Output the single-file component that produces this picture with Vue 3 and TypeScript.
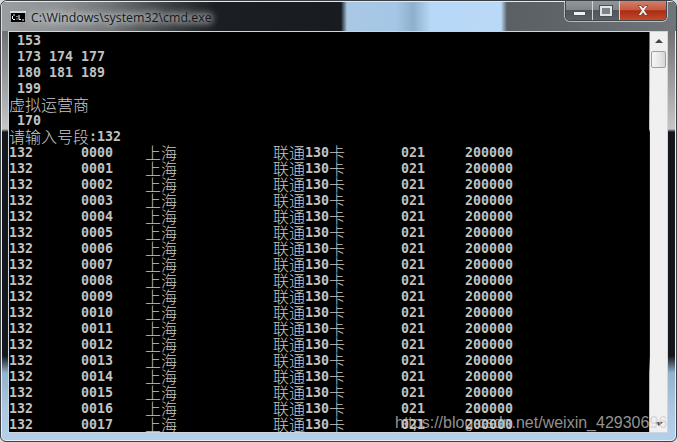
<script setup lang="ts">
const rows: string[] = Array.from({ length: 18 }, (_, i) => String(i).padStart(4, '0'))
</script>

<template>
  <div class="window">
    <header class="titlebar">
      <div class="title-left">
        <svg class="app-icon" width="16" height="12" viewBox="0 0 16 12">
          <rect x="0" y="0" width="16" height="12" fill="#9aa0a4" />
          <rect x="0" y="0" width="16" height="2" fill="#d5d9dc" />
          <rect x="1" y="2" width="14" height="9" fill="#000" />
          <path d="M3 4h2M2.500 5v3M3 8.500h2M7 5v1M7 7.500v1M9 4v4.500h2M12 9h2" stroke="#fff" stroke-width="1" fill="none" />
        </svg>
        <span class="title-text">C:\Windows\system32\cmd.exe</span>
      </div>
      <div class="controls">
        <button class="ctl ctl-min" aria-label="minimize"><i class="min-glyph"></i></button>
        <button class="ctl ctl-max" aria-label="maximize"><i class="max-glyph"></i></button>
        <button class="ctl ctl-close" aria-label="close">
          <svg width="16" height="13" viewBox="0 0 16 13">
            <path d="M3 1.500h3l2 2.500 2-2.500h3l-3.500 5 3.500 5h-3l-2-2.800-2 2.800h-3l3.500-5z" fill="#f4f0ee" stroke="#6b2a20" stroke-width="0.7" />
          </svg>
        </button>
      </div>
    </header>
    <div class="client">
      <main class="console">
        <div class="line"> 153</div>
        <div class="line"> 173 174 177</div>
        <div class="line"> 180 181 189</div>
        <div class="line"> 199</div>
        <div class="line"><span class="cjk">虚拟运营商</span></div>
        <div class="line"> 170</div>
        <div class="line"><span class="cjk">请输入号段</span>:132</div>
        <div v-for="n in rows" :key="n" class="line row">
          <span>132</span>
          <span>{{ n }}</span>
          <span><span class="cjk">上海</span></span>
          <span><span class="cjk">联通</span>130<span class="cjk">卡</span></span>
          <span>021</span>
          <span>200000</span>
        </div>
      </main>
      <aside class="scrollbar">
        <div class="arrow up"></div>
        <div class="thumb"></div>
        <div class="track"></div>
        <div class="arrow down"></div>
      </aside>
    </div>
    <div class="watermark">https://blog.csdn.net/weixin_42930696</div>
  </div>
</template>

<style scoped>
.window {
  position: relative;
  width: 677px;
  height: 442px;
  box-sizing: border-box;
  overflow: hidden;
  display: flex;
  flex-direction: column;
  border-radius: 7px 7px 6px 6px;
  border: 1px solid #3c4044;
  box-shadow: inset 0 0 0 1px #e8eef2;
  background: linear-gradient(180deg,
    #6f7173 30px, #c6c6c6 128px, #14181c 131px, #14181c 355px,
    #94b2ce 372px, #aec8e2 410px, #b4d0ea 442px);
}
.titlebar {
  height: 30px;
  flex: none;
  display: flex;
  justify-content: space-between;
  background:
    linear-gradient(90deg,
      #9a9ea0 0, #8d9193 60px, #6f7375 110px, #3a3e41 170px,
      #1b1f23 215px, #181c20 340px, #a9c8e4 346px, #a5c6e6 395px,
      #8fb0cc 412px, #b7d8f6 430px, #b9d9f6 500px, #5a6064 506px,
      #5e6468 560px, #70767a 676px);
  box-shadow: inset 0 1px 0 #e4e8ea, inset 1px 0 0 #d8dcde;
}
.title-left {
  display: flex;
  align-items: center;
  gap: 5px;
  padding: 2px 0 0 9px;
}
.app-icon {
  display: block;
}
.title-text {
  font-family: "Open Sans", "Liberation Sans", Arial, sans-serif;
  font-size: 12.360px;
  color: #14181c;
  text-shadow: 0 0 6px #d6dadc, 0 0 8px #c6cacc, 0 0 10px #c6cacc;
}
.controls {
  display: flex;
  height: 19px;
  margin-right: 9px;
  border: 1px solid #44484c;
  border-top: 0;
  border-radius: 0 0 5px 5px;
  box-shadow: 0 0 0 1px rgba(255, 255, 255, 0.55);
  overflow: hidden;
}
.ctl {
  display: flex;
  align-items: center;
  justify-content: center;
  padding: 0;
  border: 0;
  height: 100%;
}
.ctl-min,
.ctl-max {
  width: 27px;
  background: linear-gradient(#8f979c 0, #7f878c 45%, #50575c 50%, #5a6165 100%);
  border-right: 1px solid #cfd5d8;
}
.ctl-close {
  width: 46px;
  background: linear-gradient(#d3806b 0, #c65a42 45%, #aa2c13 52%, #c5492c 100%);
}
.min-glyph {
  display: block;
  width: 11px;
  height: 3px;
  margin-top: 6px;
  background: #eef1f2;
  box-shadow: 0 0 0 1px #4a5054;
}
.max-glyph {
  display: block;
  width: 8px;
  height: 6px;
  border: 2px solid #dfe3e5;
  box-shadow: 0 0 0 1px #4a5054;
  background: #7a8286;
}
.client {
  display: flex;
  margin: 1px 9px 0 8px;
  height: 400px;
  flex: none;
  box-shadow: 0 0 0 1px #ccd6dd;
}
.console {
  width: 640px;
  height: 400px;
  box-sizing: border-box;
  padding-top: 1px;
  flex: none;
  overflow: hidden;
  background: #000;
  color: #c0c0c0;
  font-family: "DejaVu Sans Mono", "Noto Sans CJK SC", monospace;
  font-weight: 700;
  font-size: 13.290px;
  line-height: 16px;
}
.line {
  height: 16px;
  white-space: pre;
}
.row {
  display: grid;
  grid-template-columns: 72px 64px 128px 128px 64px 80px;
}
.cjk {
  display: inline-block;
  height: 16px;
  vertical-align: top;
  margin-top: -1px;
  font-family: "Noto Sans CJK SC", sans-serif;
  font-size: 16px;
  font-weight: 300;
  line-height: 16px;
  color: #c8c8c8;
}
.scrollbar {
  flex: 1;
  margin-left: 1px;
  display: flex;
  flex-direction: column;
  background: #f0f0f0;
}
.arrow {
  flex: none;
  height: 17px;
  display: flex;
  align-items: center;
  justify-content: center;
}
.arrow::before {
  content: "";
  width: 0;
  height: 0;
  border-left: 4px solid transparent;
  border-right: 4px solid transparent;
}
.up::before {
  border-bottom: 4px solid #444;
}
.down::before {
  border-top: 4px solid #444;
}
.thumb {
  flex: none;
  height: 15px;
  margin: 2px 1px 0;
  border: 1px solid #9aa0a4;
  border-radius: 2px;
  background: linear-gradient(90deg, #f6f6f6, #e6e6e6 60%, #d6d6d6);
}
.track {
  flex: 1;
}
.watermark {
  position: absolute;
  left: 394px;
  top: 412px;
  font-family: "Liberation Sans", Arial, sans-serif;
  font-size: 16px;
  line-height: 20px;
  white-space: nowrap;
  color: rgba(205, 205, 205, 0.72);
}
</style>

<style>
html, body {
  margin: 0;
  background: #d8dcde;
}
</style>
